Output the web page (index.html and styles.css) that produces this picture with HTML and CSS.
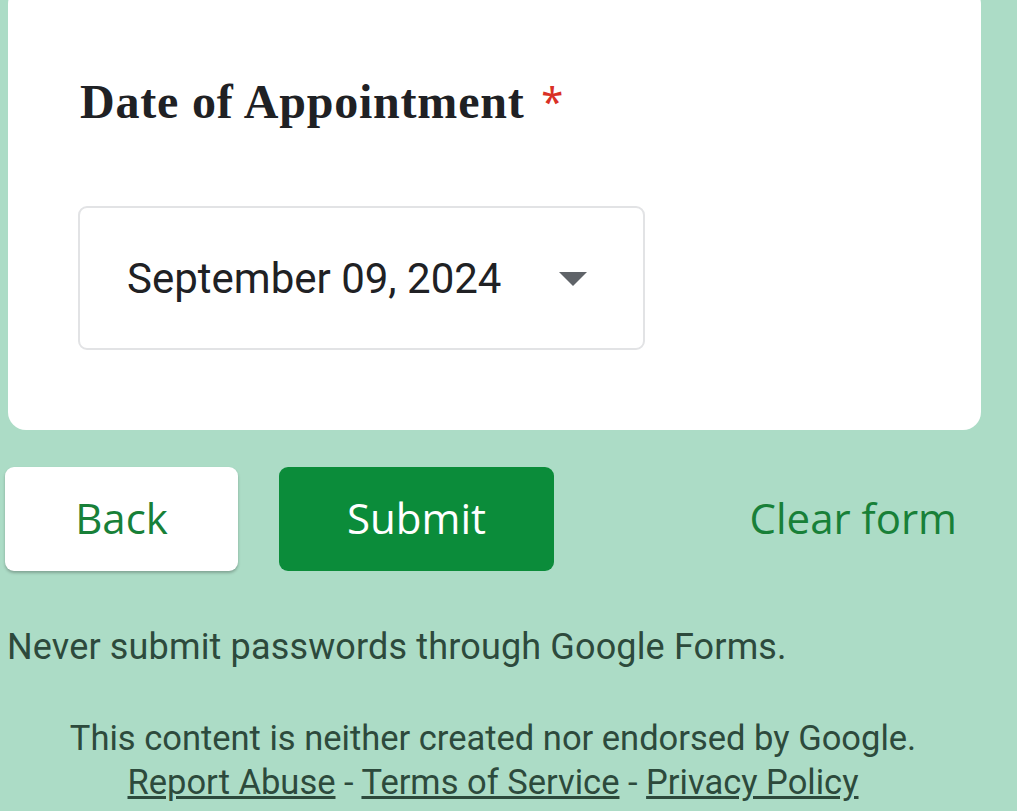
FILE: index.html
```html
<!DOCTYPE html>
<html lang="en">
<head>
    <meta charset="UTF-8">
    <title>Date of Appointment</title>
    <link rel="stylesheet" href="styles.css">
</head>
<body>
    <div class="page">
        <div class="card">
            <div class="question">
                Date of Appointment <span class="required">*</span>
            </div>
            <div class="dropdown">
                <span class="dropdownValue">September 09, 2024</span>
                <svg class="arrow" width="28" height="14" viewBox="0 0 28 14">
                    <path d="M0 0 L28 0 L14 14 Z" fill="#5f6368"/>
                </svg>
            </div>
        </div>

        <div class="buttons">
            <button class="back" type="button">Back</button>
            <button class="submit" type="submit">Submit</button>
            <button class="clear" type="reset">Clear form</button>
        </div>

        <p class="warning">Never submit passwords through Google Forms.</p>

        <div class="footer">
            <p>This content is neither created nor endorsed by Google.</p>
            <p><a href="#">Report Abuse</a> - <a href="#">Terms of Service</a> - <a href="#">Privacy Policy</a></p>
        </div>
    </div>
</body>
</html>
```

FILE: styles.css
```css
* {
    margin: 0px;
    padding: 0px;
    box-sizing: border-box;
}

html, body {
    background-color: #acdcc6;
    overflow: hidden;
}

.page {
    width: 976px;
    margin-left: 5px;
}

/* white question card, its top edge runs off the screen */
.card {
    margin-top: -14px;
    margin-left: 3px;
    height: 444px;
    background-color: #fff;
    border-radius: 18px;
    padding: 88px 0 0 72px;
}

.question {
    font-family: "Liberation Serif", "Times New Roman", serif;
    font-weight: bold;
    font-size: 48px;
    line-height: 54px;
    color: #202124;
    letter-spacing: 0.8px;
}

.required {
    font-family: "Noto Sans", sans-serif;
    font-weight: normal;
    font-size: 40px;
    color: #d93025;
    margin-left: 4px;
    vertical-align: 2px;
}

.dropdown {
    width: 567px;
    height: 144px;
    margin-top: 77px;
    margin-left: -2px;
    border: 2px solid #e2e3e5;
    border-radius: 9px;
    display: flex;
    align-items: center;
    padding: 0 56px 0 47px;
}

.dropdownValue {
    font-family: Roboto, "Noto Sans", sans-serif;
    font-size: 42px;
    color: #202124;
    flex: 1;
}

.arrow {
    margin-top: 2px;
}

.buttons {
    display: flex;
    align-items: center;
    margin-top: 37px;
    height: 104px;
}

button {
    font-family: "Open Sans", Roboto, sans-serif;
    font-size: 42px;
    font-weight: 500;
    border: none;
    border-radius: 9px;
    height: 104px;
    padding-bottom: 4px;
    cursor: pointer;
}

.back {
    width: 233px;
    background-color: #fff;
    color: #188038;
    box-shadow: 0 2px 3px rgba(0,0,0,0.25);
}

.submit {
    width: 275px;
    margin-left: 41px;
    background-color: #0b8c3a;
    color: #fff;
}

.clear {
    margin-left: auto;
    margin-right: 14px;
    background: none;
    color: #188038;
    padding: 0 10px 4px 10px;
}

.warning {
    font-family: Roboto, "Noto Sans", sans-serif;
    font-size: 36px;
    letter-spacing: 0.15px;
    color: #2d4a3c;
    margin-top: 55px;
    margin-left: 2px;
}

.footer {
    margin-top: 48px;
    text-align: center;
    font-family: Roboto, "Noto Sans", sans-serif;
    font-size: 34.5px;
    line-height: 44px;
    color: #2d4a3c;
}

.footer a {
    color: #2d4a3c;
}
```
